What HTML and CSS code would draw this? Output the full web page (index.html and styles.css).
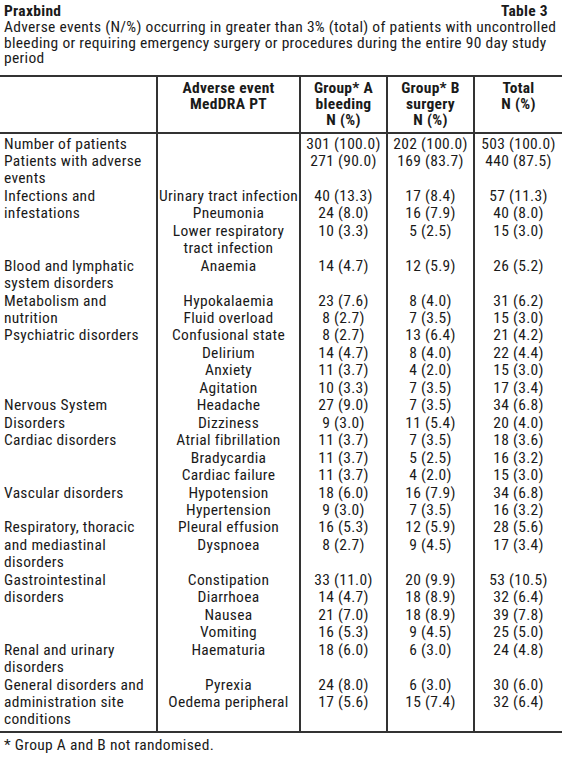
FILE: index.html
```html
<!DOCTYPE html>
<html lang="en">
<head>
    <meta charset="UTF-8">
    <meta name="viewport" content="width=device-width, initial-scale=1.0">
    <title>Praxbind - Table 3</title>
    <link rel="stylesheet" href="styles.css">
</head>
<body>
    <div class="page">
        <div class="title-bar">
            <span class="brand">Praxbind</span>
            <span class="table-no">Table 3</span>
        </div>
        <p class="caption">Adverse events (N/%) occurring in greater than 3% (total) of patients with uncontrolled bleeding or requiring emergency surgery or procedures during the entire 90 day study period</p>

        <table class="ae-table">
            <colgroup>
                <col class="c-cat">
                <col class="c-pt">
                <col class="c-num">
                <col class="c-num">
                <col class="c-tot">
            </colgroup>
            <thead>
                <tr>
                    <th></th>
                    <th>Adverse event<br>MedDRA PT</th>
                    <th>Group* A<br>bleeding<br>N (%)</th>
                    <th>Group* B<br>surgery<br>N (%)</th>
                    <th>Total<br>N (%)</th>
                </tr>
            </thead>
            <tbody>
                <tr class="first">
                    <td class="cat">Number of patients<br>Patients with adverse<br>events</td>
                    <td></td>
                    <td>301 (100.0)<br>271 (90.0)</td>
                    <td>202 (100.0)<br>169 (83.7)</td>
                    <td>503 (100.0)<br>440 (87.5)</td>
                </tr>
                <tr>
                    <td class="cat">Infections and<br>infestations</td>
                    <td>Urinary tract infection<br>Pneumonia<br>Lower respiratory<br>tract infection</td>
                    <td>40 (13.3)<br>24 (8.0)<br>10 (3.3)</td>
                    <td>17 (8.4)<br>16 (7.9)<br>5 (2.5)</td>
                    <td>57 (11.3)<br>40 (8.0)<br>15 (3.0)</td>
                </tr>
                <tr>
                    <td class="cat">Blood and lymphatic<br>system disorders</td>
                    <td>Anaemia</td>
                    <td>14 (4.7)</td>
                    <td>12 (5.9)</td>
                    <td>26 (5.2)</td>
                </tr>
                <tr>
                    <td class="cat">Metabolism and<br>nutrition</td>
                    <td>Hypokalaemia<br>Fluid overload</td>
                    <td>23 (7.6)<br>8 (2.7)</td>
                    <td>8 (4.0)<br>7 (3.5)</td>
                    <td>31 (6.2)<br>15 (3.0)</td>
                </tr>
                <tr>
                    <td class="cat">Psychiatric disorders</td>
                    <td>Confusional state<br>Delirium<br>Anxiety<br>Agitation</td>
                    <td>8 (2.7)<br>14 (4.7)<br>11 (3.7)<br>10 (3.3)</td>
                    <td>13 (6.4)<br>8 (4.0)<br>4 (2.0)<br>7 (3.5)</td>
                    <td>21 (4.2)<br>22 (4.4)<br>15 (3.0)<br>17 (3.4)</td>
                </tr>
                <tr>
                    <td class="cat">Nervous System<br>Disorders</td>
                    <td>Headache<br>Dizziness</td>
                    <td>27 (9.0)<br>9 (3.0)</td>
                    <td>7 (3.5)<br>11 (5.4)</td>
                    <td>34 (6.8)<br>20 (4.0)</td>
                </tr>
                <tr>
                    <td class="cat">Cardiac disorders</td>
                    <td>Atrial fibrillation<br>Bradycardia<br>Cardiac failure</td>
                    <td>11 (3.7)<br>11 (3.7)<br>11 (3.7)</td>
                    <td>7 (3.5)<br>5 (2.5)<br>4 (2.0)</td>
                    <td>18 (3.6)<br>16 (3.2)<br>15 (3.0)</td>
                </tr>
                <tr>
                    <td class="cat">Vascular disorders</td>
                    <td>Hypotension<br>Hypertension</td>
                    <td>18 (6.0)<br>9 (3.0)</td>
                    <td>16 (7.9)<br>7 (3.5)</td>
                    <td>34 (6.8)<br>16 (3.2)</td>
                </tr>
                <tr>
                    <td class="cat">Respiratory, thoracic<br>and mediastinal<br>disorders</td>
                    <td>Pleural effusion<br>Dyspnoea</td>
                    <td>16 (5.3)<br>8 (2.7)</td>
                    <td>12 (5.9)<br>9 (4.5)</td>
                    <td>28 (5.6)<br>17 (3.4)</td>
                </tr>
                <tr>
                    <td class="cat">Gastrointestinal<br>disorders</td>
                    <td>Constipation<br>Diarrhoea<br>Nausea<br>Vomiting</td>
                    <td>33 (11.0)<br>14 (4.7)<br>21 (7.0)<br>16 (5.3)</td>
                    <td>20 (9.9)<br>18 (8.9)<br>18 (8.9)<br>9 (4.5)</td>
                    <td>53 (10.5)<br>32 (6.4)<br>39 (7.8)<br>25 (5.0)</td>
                </tr>
                <tr>
                    <td class="cat">Renal and urinary<br>disorders</td>
                    <td>Haematuria</td>
                    <td>18 (6.0)</td>
                    <td>6 (3.0)</td>
                    <td>24 (4.8)</td>
                </tr>
                <tr class="last">
                    <td class="cat">General disorders and<br>administration site<br>conditions</td>
                    <td>Pyrexia<br>Oedema peripheral</td>
                    <td>24 (8.0)<br>17 (5.6)</td>
                    <td>6 (3.0)<br>15 (7.4)</td>
                    <td>30 (6.0)<br>32 (6.4)</td>
                </tr>
            </tbody>
        </table>

        <p class="footnote">* Group A and B not randomised.</p>
    </div>
</body>
</html>
```

FILE: styles.css
```css
body {
    margin: 0;
    background-color: #ffffff;
    color: #1a1a1a;
    font-family: "Roboto Condensed", Roboto, "Liberation Sans", sans-serif;
    font-stretch: condensed;
    font-size: 15.5px;
    letter-spacing: 0.3px;
}

.page {
    width: 562px;
}

.title-bar {
    display: flex;
    justify-content: space-between;
    padding: 3px 14px 0 4px;
    font-weight: bold;
    line-height: 17px;
}

.caption {
    margin: 0;
    padding: 0 4px;
    line-height: 15.5px;
}

.ae-table {
    width: 100%;
    margin-top: 8px;
    border-collapse: collapse;
    table-layout: fixed;
    border-top: 2px solid #333333;
    border-bottom: 2px solid #333333;
}

.c-cat { width: 157px; }
.c-pt { width: 143px; }
.c-num { width: 87px; }
.c-tot { width: 88px; }

.ae-table th,
.ae-table td {
    padding: 0;
    vertical-align: top;
    text-align: center;
    border-left: 2px solid #333333;
    white-space: nowrap;
}

.ae-table th:first-child,
.ae-table td:first-child {
    border-left: none;
}

.ae-table th {
    padding: 3px 0 4px;
    line-height: 16px;
    border-bottom: 2px solid #333333;
}

.ae-table td {
    line-height: 17.45px;
}

.ae-table td.cat {
    text-align: left;
    padding-left: 4px;
}

.ae-table tr.first td {
    padding-top: 2px;
}

.ae-table tr.last td {
    padding-bottom: 2px;
}

.footnote {
    margin: 4px 0 0;
    padding: 0 4px;
    line-height: 17px;
}
```
